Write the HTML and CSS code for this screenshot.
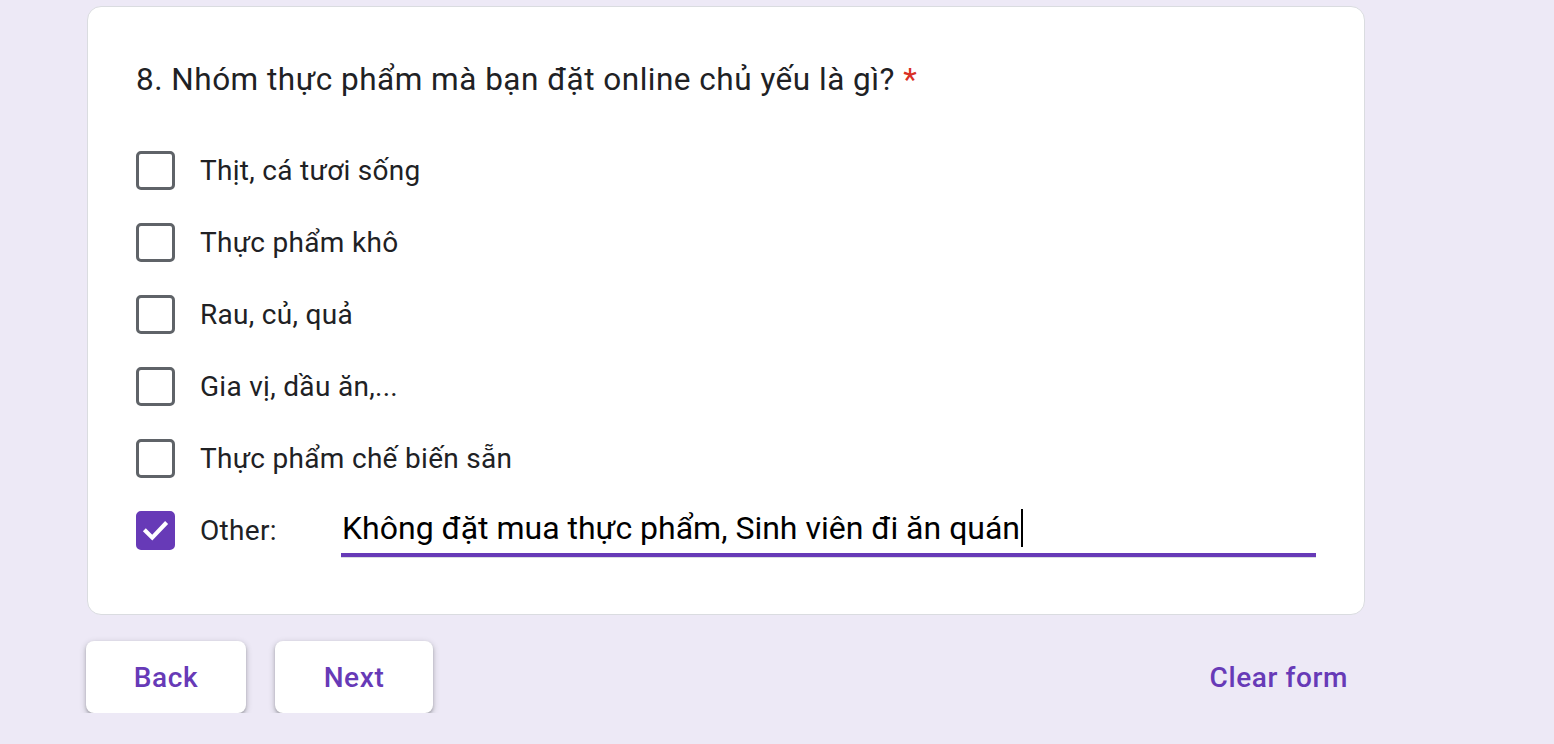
FILE: index.html
```html
<!DOCTYPE html>
<html lang="vi">
<head>
<meta charset="utf-8">
<title>Form</title>
<link rel="stylesheet" href="styles.css">
</head>
<body>
<div class="page">
  <div class="card">
    <div class="title">8. Nhóm thực phẩm mà bạn đặt online chủ yếu là gì? <span class="req">*</span></div>
    <div class="options">
      <div class="opt"><span class="box"></span><span class="label">Thịt, cá tươi sống</span></div>
      <div class="opt"><span class="box"></span><span class="label">Thực phẩm khô</span></div>
      <div class="opt"><span class="box"></span><span class="label">Rau, củ, quả</span></div>
      <div class="opt"><span class="box"></span><span class="label">Gia vị, dầu ăn,...</span></div>
      <div class="opt"><span class="box"></span><span class="label">Thực phẩm chế biến sẵn</span></div>
      <div class="opt">
        <span class="box checked"><svg viewBox="0 0 24 24" width="31" height="31"><path d="M4.5 12.5 L9.5 17.5 L19.5 7" fill="none" stroke="#fff" stroke-width="3.2" stroke-linecap="square"/></svg></span>
        <span class="label other-label">Other:</span>
        <div class="field"><span class="field-text">Không đặt mua thực phẩm, Sinh viên đi ăn quán</span><span class="caret"></span></div>
      </div>
    </div>
  </div>
  <div class="nav">
    <div class="btns">
      <div class="btn">Back</div>
      <div class="btn">Next</div>
    </div>
    <div class="clear">Clear form</div>
  </div>
</div>
</body>
</html>
```
FILE: styles.css
```css
html, body {
  margin: 0;
  padding: 0;
  background: #ede9f6;
  font-family: Roboto, "Liberation Sans", Arial, sans-serif;
}
.page {
  width: 1278px;
  margin-left: 87px;
  padding-top: 6px;
}
.card {
  background: #fff;
  border: 1px solid #dadce0;
  border-radius: 14px;
  padding: 53px 48px 48px 48px;
}
.title {
  font-size: 31.5px;
  line-height: 40px;
  color: #202124;
  letter-spacing: 0.5px;
}
.req {
  color: #d93025;
}
.options {
  margin-top: 34px;
}
.opt {
  height: 72px;
  display: flex;
  align-items: center;
}
.box {
  width: 39px;
  height: 39px;
  box-sizing: border-box;
  border: 3.5px solid #5f6368;
  border-radius: 5px;
  flex: none;
  display: flex;
  align-items: center;
  justify-content: center;
}
.box.checked {
  background: #673ab7;
  border-color: #673ab7;
}
.label {
  margin-left: 25px;
  font-size: 28px;
  color: #202124;
  letter-spacing: 0.3px;
}
.other-label {
  width: 141px;
  flex: none;
}
.field {
  flex: 1;
  align-self: flex-end;
  height: 62px;
  box-sizing: border-box;
  border-bottom: 4px solid #673ab7;
  display: flex;
  align-items: center;
  padding-left: 1px;
  padding-top: 8px;
  margin-bottom: 9px;
  position: relative;
}
.field::after {
  content: "";
  position: absolute;
  left: 0;
  right: 0;
  bottom: -5px;
  height: 1px;
  background: #dadce0;
}
.field-text {
  font-size: 32px;
  color: #000;
  white-space: nowrap;
}
.caret {
  display: inline-block;
  width: 2px;
  height: 38px;
  background: #000;
  margin-left: 1px;
}
.nav {
  margin-top: 26px;
  display: flex;
  align-items: center;
  justify-content: space-between;
}
.btns {
  display: flex;
  gap: 29px;
  margin-left: -1px;
}
.btn {
  width: 160px;
  height: 72px;
  background: #fff;
  border-radius: 8px;
  box-shadow: 0 2px 3px rgba(60, 64, 67, 0.3), 0 2px 5px 2px rgba(60, 64, 67, 0.15);
  display: flex;
  align-items: center;
  justify-content: center;
  color: #673ab7;
  font-size: 28px;
  font-weight: 500;
  letter-spacing: 0.6px;
}
.btn + .btn {
  width: 158px;
}
.clear {
  color: #673ab7;
  font-size: 28px;
  font-weight: 500;
  letter-spacing: 0.6px;
  margin-right: 17px;
}
```
